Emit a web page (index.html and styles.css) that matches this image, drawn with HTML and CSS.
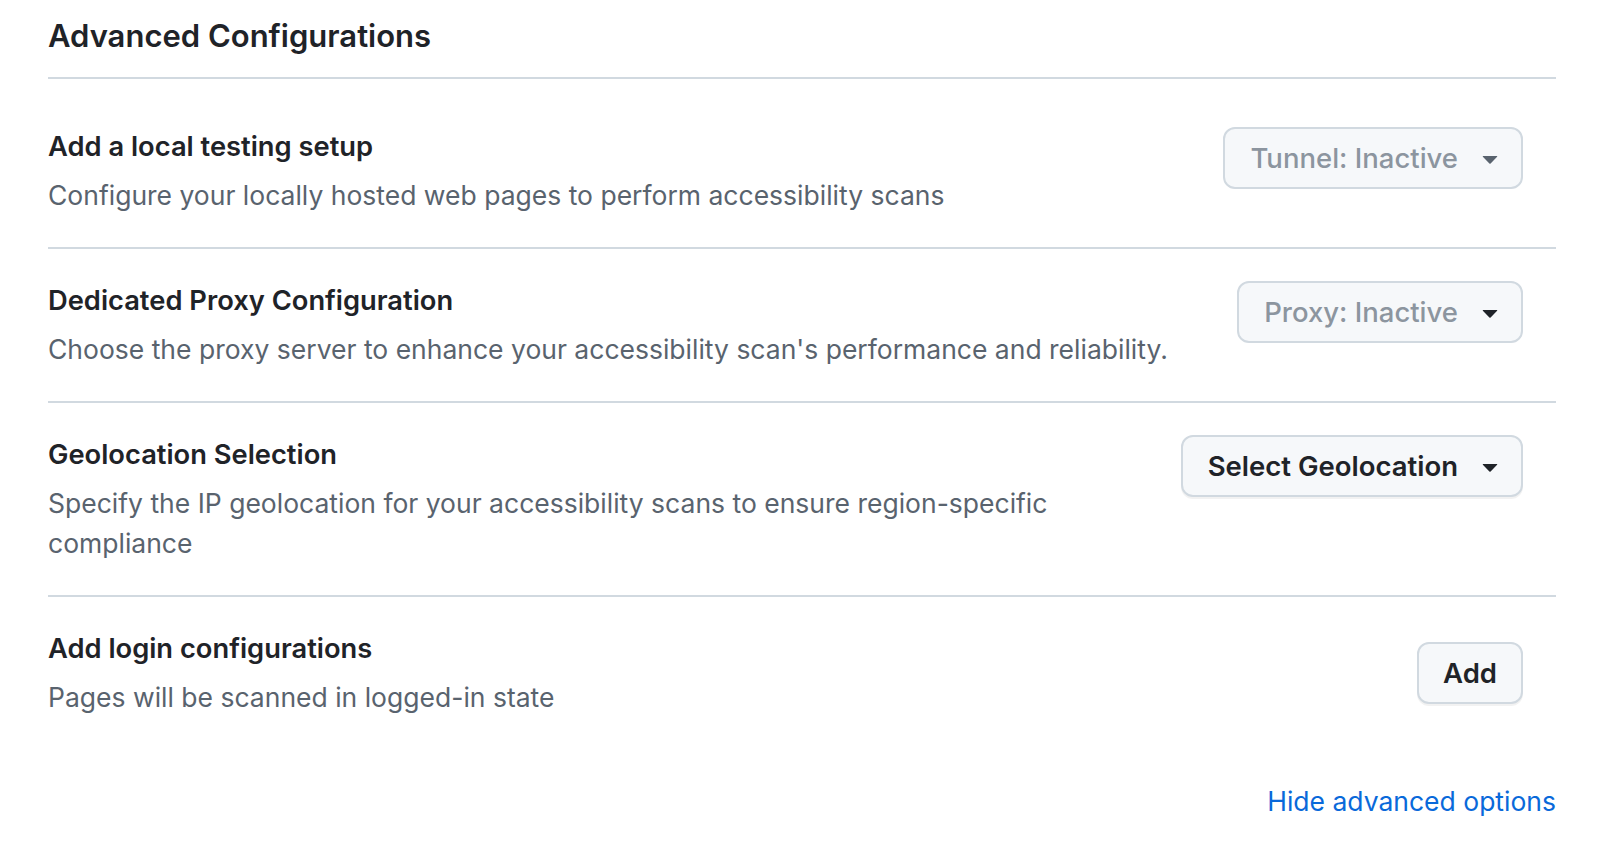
FILE: index.html
```html
<!DOCTYPE html>
<html lang="en">
<head>
<meta charset="utf-8">
<title>Advanced Configurations</title>
<link rel="stylesheet" href="styles.css">
</head>
<body>
<section class="panel">
  <h2 class="panel-title">Advanced Configurations</h2>
  <ul class="config-list">
    <li class="config-row">
      <div class="config-text">
        <h3 class="config-heading">Add a local testing setup</h3>
        <p class="config-desc">Configure your locally hosted web pages to perform accessibility scans</p>
      </div>
      <button class="btn btn-inactive" type="button">
        <span>Tunnel: Inactive</span>
        <svg class="caret caret-muted" viewBox="0 0 16 16" width="32" height="32" aria-hidden="true"><path d="m4.427 7.427 3.396 3.396a.25.25 0 0 0 .354 0l3.396-3.396A.25.25 0 0 0 11.396 7H4.604a.25.25 0 0 0-.177.427Z"/></svg>
      </button>
    </li>
    <li class="config-row">
      <div class="config-text">
        <h3 class="config-heading">Dedicated Proxy Configuration</h3>
        <p class="config-desc">Choose the proxy server to enhance your accessibility scan's performance and reliability.</p>
      </div>
      <button class="btn btn-inactive" type="button">
        <span>Proxy: Inactive</span>
        <svg class="caret" viewBox="0 0 16 16" width="32" height="32" aria-hidden="true"><path d="m4.427 7.427 3.396 3.396a.25.25 0 0 0 .354 0l3.396-3.396A.25.25 0 0 0 11.396 7H4.604a.25.25 0 0 0-.177.427Z"/></svg>
      </button>
    </li>
    <li class="config-row">
      <div class="config-text">
        <h3 class="config-heading">Geolocation Selection</h3>
        <p class="config-desc">Specify the IP geolocation for your accessibility scans to ensure region-specific compliance</p>
      </div>
      <button class="btn btn-active" type="button">
        <span>Select Geolocation</span>
        <svg class="caret" viewBox="0 0 16 16" width="32" height="32" aria-hidden="true"><path d="m4.427 7.427 3.396 3.396a.25.25 0 0 0 .354 0l3.396-3.396A.25.25 0 0 0 11.396 7H4.604a.25.25 0 0 0-.177.427Z"/></svg>
      </button>
    </li>
    <li class="config-row config-row-center">
      <div class="config-text">
        <h3 class="config-heading">Add login configurations</h3>
        <p class="config-desc">Pages will be scanned in logged-in state</p>
      </div>
      <button class="btn btn-active btn-plain" type="button">Add</button>
    </li>
  </ul>
  <div class="panel-footer">
    <a class="link" href="#">Hide advanced options</a>
  </div>
</section>
</body>
</html>
```
FILE: styles.css
```css
* { box-sizing: border-box; }

html, body {
  margin: 0;
  padding: 0;
  background: #ffffff;
}

body {
  font-family: Inter, "Noto Sans", "Liberation Sans", sans-serif;
  color: #1f2328;
  -webkit-font-smoothing: antialiased;
}

.panel {
  padding: 12px 50px 0 48px;
}

.panel-title {
  margin: 0;
  font-size: 31px;
  line-height: 48px;
  font-weight: 600;
  color: #1f2328;
  padding-bottom: 17px;
  border-bottom: 2px solid #d1d9e0;
}

.config-list {
  list-style: none;
  margin: 16px 0 0;
  padding: 0;
}

.config-row {
  display: flex;
  align-items: flex-start;
  justify-content: space-between;
  gap: 24px;
  padding: 32px 33px 32px 0;
  border-bottom: 2px solid #d1d9e0;
}

.config-row:last-child {
  border-bottom: none;
}

.config-row-center {
  align-items: center;
}

.config-text {
  flex: 1 1 auto;
  min-width: 0;
}

.config-heading {
  margin: 0 0 8px;
  font-size: 27.3px;
  line-height: 40px;
  font-weight: 600;
  color: #1f2328;
}

.config-desc {
  margin: 0;
  font-size: 26.5px;
  line-height: 40px;
  font-weight: 400;
  color: #59636e;
}

.btn {
  flex: 0 0 auto;
  display: inline-flex;
  align-items: center;
  gap: 16px;
  height: 62px;
  padding: 0 15px 0 25px;
  font-family: inherit;
  font-size: 27.5px;
  line-height: 40px;
  font-weight: 500;
  background: #f6f8fa;
  border: 2px solid #d1d9e0;
  border-radius: 12px;
  cursor: pointer;
}

.btn-plain {
  padding: 0 24px;
}

.btn-inactive {
  color: #8c959f;
}

.btn-active {
  color: #1f2328;
  font-weight: 600;
  box-shadow: 0 2px 0 rgba(31, 35, 40, 0.06);
}

.caret {
  display: block;
  fill: #1f2328;
}

.caret-muted {
  fill: #59636e;
}

.panel-footer {
  display: flex;
  justify-content: flex-end;
  padding-top: 32px;
}

.link {
  font-size: 26.5px;
  line-height: 40px;
  color: #0969da;
  text-decoration: none;
}
```
